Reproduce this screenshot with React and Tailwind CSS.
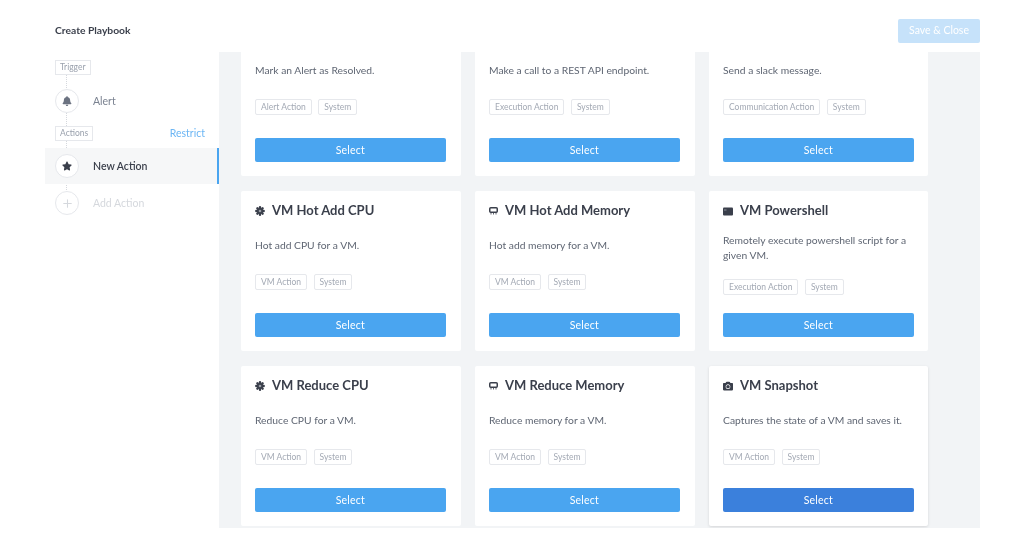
import React from 'react';
import { FaBell, FaStar, FaCamera } from 'react-icons/fa';
import { Plus } from 'lucide-react';

function CpuIcon() {
  const petals = [0, 45, 90, 135, 180, 225, 270, 315];
  return (
    <svg width="10" height="10" viewBox="0 0 10 10" className="text-[#3a3f4b]">
      {petals.map(a => (
        <circle key={a} cx="5" cy="1.3" r="1.2" fill="currentColor" transform={`rotate(${a} 5 5)`} />
      ))}
      <circle cx="5" cy="5" r="3.2" fill="currentColor" />
      <circle cx="5" cy="5" r="1.3" fill="#9a9ea6" />
    </svg>
  );
}

function MemoryIcon() {
  return (
    <svg width="9" height="8" viewBox="0 0 9 8" className="text-[#3a3f4b]">
      <rect x="0.75" y="0.75" width="7.5" height="4.5" rx="1" fill="none" stroke="currentColor" strokeWidth="1.5" />
      <path d="M2 5.5V7.5M4.5 5.5V7.5M7 5.5V7.5" stroke="currentColor" strokeWidth="0.8" />
    </svg>
  );
}

function TerminalIcon() {
  return (
    <svg width="10" height="9" viewBox="0 0 10 9" className="text-[#3a3f4b]">
      <rect x="0" y="0.5" width="10" height="8" rx="1" fill="currentColor" />
      <rect x="1" y="2.5" width="2.5" height="1" fill="#8a8f99" />
    </svg>
  );
}

const rows = [
  { desc: 'Mark an Alert as Resolved.', tags: ['Alert Action', 'System'] },
  { desc: 'Make a call to a REST API endpoint.', tags: ['Execution Action', 'System'] },
  { desc: 'Send a slack message.', tags: ['Communication Action', 'System'] },
  { icon: <CpuIcon />, title: 'VM Hot Add CPU', desc: 'Hot add CPU for a VM.', tags: ['VM Action', 'System'] },
  { icon: <MemoryIcon />, title: 'VM Hot Add Memory', desc: 'Hot add memory for a VM.', tags: ['VM Action', 'System'] },
  { icon: <TerminalIcon />, title: 'VM Powershell', desc: 'Remotely execute powershell script for a given VM.', tags: ['Execution Action', 'System'] },
  { icon: <CpuIcon />, title: 'VM Reduce CPU', desc: 'Reduce CPU for a VM.', tags: ['VM Action', 'System'] },
  { icon: <MemoryIcon />, title: 'VM Reduce Memory', desc: 'Reduce memory for a VM.', tags: ['VM Action', 'System'] },
  { icon: <FaCamera size={10} className="text-[#3a3f4b]" />, title: 'VM Snapshot', desc: 'Captures the state of a VM and saves it.', tags: ['VM Action', 'System'], hover: true },
];

function Card({ item }) {
  return (
    <div className={`h-[160px] bg-white rounded-[2px] px-[14px] pt-[12px] pb-[14px] flex flex-col ${item.hover ? 'shadow-[0_1px_3px_rgba(0,0,0,0.12)]' : ''}`}>
      <div className="h-[16px] flex items-center gap-[7px] text-[13px] font-bold text-[#3a3f4b] whitespace-nowrap">
        {item.icon}
        <span>{item.title}</span>
      </div>
      <div className="flex-1 flex flex-col justify-center pb-[4px]">
        <p className="min-h-[20px] text-[10.3px] leading-[15px] text-[#5f6673]">{item.desc}</p>
        <div className="flex gap-[6.5px] mt-[16px]">
          {item.tags.map(tag => (
            <span key={tag} className="h-[16px] px-[5px] flex items-center border border-[#e6e8ec] rounded-[2px] text-[8.5px] text-[#a3a9b4] whitespace-nowrap">
              {tag}
            </span>
          ))}
        </div>
      </div>
      <button className={`h-[24px] w-[190.5px] pt-[1px] shrink-0 rounded-[2px] text-white text-[10.5px] tracking-[0.2px] ${item.hover ? 'bg-[#3b80dc]' : 'bg-[#4aa5f0]'}`}>
        Select
      </button>
    </div>
  );
}

function StepTag({ children }) {
  return (
    <span className="h-[15px] px-[4px] flex items-center bg-white border border-[#e6e8ec] text-[8.5px] text-[#9aa1ad]">
      {children}
    </span>
  );
}

function Step({ icon, label, active, muted }) {
  return (
    <div className={`relative h-[36px] pl-[10px] flex items-center ${active ? 'bg-[#f6f7f8] border-r-2 border-[#4aa5f0]' : ''}`}>
      <span className="w-[24px] h-[24px] rounded-full bg-white border border-[#e6e8ec] flex items-center justify-center shrink-0">
        {icon}
      </span>
      <span className={`ml-[14px] text-[10.5px] ${active ? 'pt-[2px] font-semibold text-[#3a3f4b]' : muted ? 'pt-[1px] text-[#d5d8dd]' : 'pt-[1px] text-[#7a8290]'}`}>
        {label}
      </span>
    </div>
  );
}

export default function App() {
  return (
    <div className="h-[543px] w-[1024px] bg-white overflow-hidden font-['Lato',sans-serif] blur-[0.4px]">
      <div className="w-[935px] ml-[45px]">
        <header className="h-[52px] pt-[10px] flex items-center justify-between pl-[10px]">
          <h1 className="text-[10.3px] font-bold text-[#3a3f4b]">Create Playbook</h1>
          <button className="w-[82px] h-[24px] rounded-[2px] bg-[#c6e2fa] text-white text-[10.5px]">
            Save &amp; Close
          </button>
        </header>
        <div className="h-[476px] flex">
          <aside className="relative w-[174px] shrink-0 pt-[8px]">
            <div className="absolute left-[21px] top-[20px] h-[120px] border-l border-dotted border-[#d5d8dd]" />
            <div className="relative pl-[10px] flex">
              <StepTag>Trigger</StepTag>
            </div>
            <div className="mt-[8px]">
              <Step icon={<FaBell size={10} className="text-[#6b7280]" />} label="Alert" />
            </div>
            <div className="relative mt-[7px] pl-[10px] pr-[14px] flex items-center justify-between">
              <StepTag>Actions</StepTag>
              <span className="text-[10.5px] leading-none text-[#6cb6f4]">Restrict</span>
            </div>
            <div className="mt-[7px]">
              <Step active icon={<FaStar size={10} className="text-[#3a3f4b]" />} label="New Action" />
            </div>
            <div className="mt-[1px]">
              <Step muted icon={<Plus size={13} className="text-[#d5d8dd]" />} label="Add Action" />
            </div>
          </aside>
          <main className="flex-1 bg-[#f2f4f6] overflow-hidden pl-[22px]">
            <div className="grid grid-cols-[220px_220px_219px] gap-x-[14px] gap-y-[15px] -mt-[36px]">
              {rows.map((item, i) => (
                <Card key={i} item={item} />
              ))}
            </div>
          </main>
        </div>
      </div>
    </div>
  );
}
